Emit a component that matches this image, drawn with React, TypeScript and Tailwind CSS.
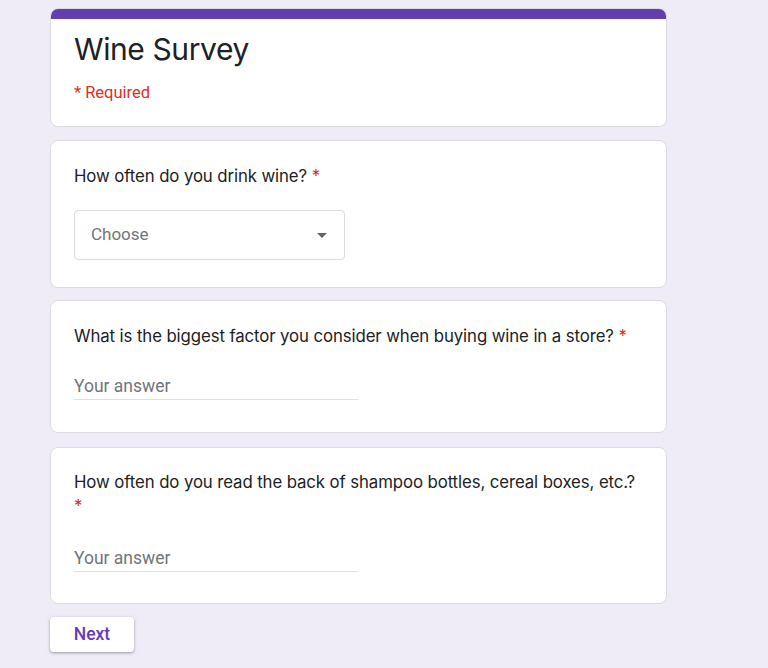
import React from "react";

function Card({ children, className = "" }: { children: React.ReactNode; className?: string }) {
  return (
    <div className={`bg-white border border-[#dadce0] rounded-[8px] ${className}`}>{children}</div>
  );
}

function Req() {
  return <span className="text-[#d93025]">*</span>;
}

export default function App() {
  const q = "font-['Inter',sans-serif] text-[16.8px] leading-[24px] text-[#202124] tracking-[-0.1px]";
  return (
    <div className="min-h-[668px] w-[768px] bg-[#efebf7] font-['Roboto',sans-serif]">
      <div className="ml-[50px] w-[617px] pt-[8px] flex flex-col">
        <div className="bg-white border border-[#dadce0] rounded-[8px] overflow-hidden">
          <div className="h-[10px] bg-[#623fb0]" />
          <div className="px-[23px] pt-[10px] pb-[21px]">
            <div className="font-['Inter',sans-serif] text-[30px] leading-[40px] text-[#202124] tracking-[-0.4px]">
              Wine Survey
            </div>
            <div className="mt-[12px] text-[16.5px] leading-[24px] text-[#d93025]">* Required</div>
          </div>
        </div>

        <Card className="mt-[13px] px-[23px] pt-[23px] pb-[27px]">
          <div className={q}>
            How often do you drink wine? <Req />
          </div>
          <div className="mt-[22px] w-[271px] h-[50px] border border-[#dadce0] rounded-[4px] flex items-center justify-between pl-[16px] pr-[17px]">
            <span className="text-[17px] text-[#70757a]">Choose</span>
            <svg width="10" height="5" viewBox="0 0 10 5">
              <path d="M0 0 L10 0 L5 5 Z" fill="#5f6368" />
            </svg>
          </div>
        </Card>

        <Card className="mt-[12px] px-[23px] pt-[23px] pb-[32px]">
          <div className={q}>
            What is the biggest factor you consider when buying wine in a store? <Req />
          </div>
          <div className="mt-[26px] w-[284px] border-b border-[#e0e0e0]">
            <span className="text-[17.5px] leading-[24px] text-[#70757a]">Your answer</span>
          </div>
        </Card>

        <Card className="mt-[14px] px-[23px] pt-[22px] pb-[31px]">
          <div className={q}>
            How often do you read the back of shampoo bottles, cereal boxes, etc.?
            <br />
            <Req />
          </div>
          <div className="mt-[28px] w-[284px] border-b border-[#e0e0e0]">
            <span className="text-[17.5px] leading-[24px] text-[#70757a]">Your answer</span>
          </div>
        </Card>

        <div className="mt-[13px]">
          <button className="w-[84px] h-[35px] bg-white rounded-[4px] shadow-[0_1px_2px_rgba(60,64,67,0.3),0_1px_3px_1px_rgba(60,64,67,0.15)] text-[17.5px] font-medium text-[#673ab7]">
            Next
          </button>
        </div>
      </div>
    </div>
  );
}
